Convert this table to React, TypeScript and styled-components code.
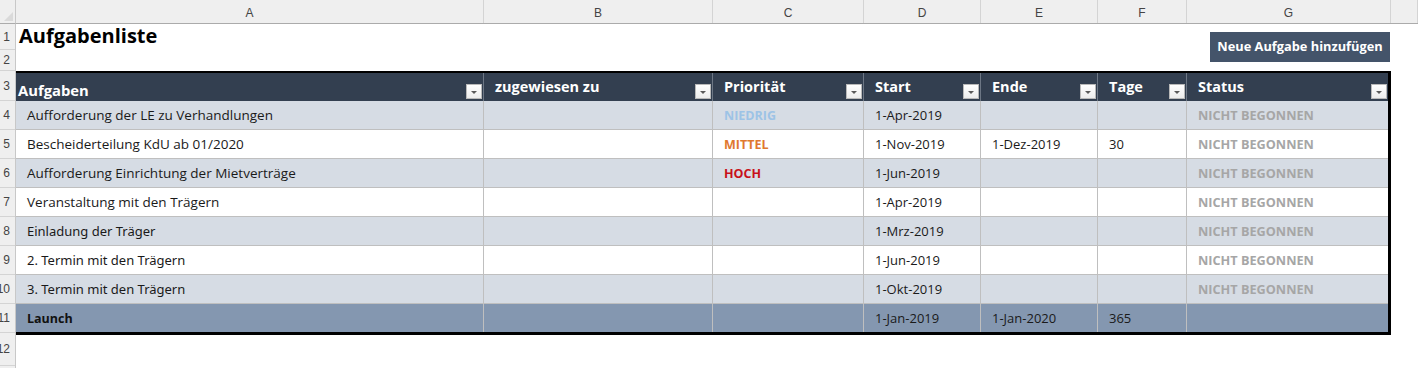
import React from "react";
import styled, { createGlobalStyle } from "styled-components";

const Global = createGlobalStyle`
  html, body { margin: 0; padding: 0; background: #ffffff; }
  body { font-family: "Open Sans", "DejaVu Sans", sans-serif; overflow: hidden; }
  * { box-sizing: border-box; }
`;

const GOTHIC = `"Open Sans", "DejaVu Sans", sans-serif`;
const CALIBRI = `"Noto Sans", "Liberation Sans", sans-serif`;
const UI = `"Liberation Sans", "DejaVu Sans", sans-serif`;

const COLS = [468, 229, 151, 117, 117, 89, 201];
const LETTER_W = [468, 229, 151, 117, 117, 89, 204];
const LETTERS = ["A", "B", "C", "D", "E", "F", "G"];
const ROW_H = [26, 21, 30, 29, 29, 29, 29, 29, 29, 29, 29, 33, 30];

const Sheet = styled.div`
  width: 1418px;
  height: 368px;
  display: grid;
  grid-template-columns: 16px 1fr;
  grid-template-rows: 24px 1fr;
  overflow: hidden;
`;

const Corner = styled.div`
  position: relative;
  background: #efefef;
  border-right: 1px solid #c8c8c8;
  border-bottom: 1px solid #ababab;
  &::after {
    content: "";
    position: absolute;
    right: 2px;
    bottom: 2px;
    border-left: 9px solid transparent;
    border-bottom: 9px solid #dadada;
  }
`;

const ColHeaders = styled.div`
  display: flex;
  background: #efefef;
  border-bottom: 1px solid #ababab;
`;

const Letter = styled.div<{ $w?: number }>`
  flex: ${(p) => (p.$w ? `0 0 ${p.$w}px` : "1 1 auto")};
  border-right: 1px solid #d4d4d4;
  display: flex;
  align-items: center;
  justify-content: center;
  font-family: ${UI};
  font-size: 12px;
  color: #444444;
  padding-top: 2px;
`;

const RowHeaders = styled.div`
  display: flex;
  flex-direction: column;
  background: #efefef;
  border-right: 1px solid #c8c8c8;
  overflow: hidden;
`;

const RowNum = styled.div<{ $h: number }>`
  flex: 0 0 ${(p) => p.$h}px;
  border-bottom: 1px solid #d4d4d4;
  display: flex;
  align-items: center;
  justify-content: flex-end;
  padding-right: 5px;
  font-family: ${UI};
  font-size: 12px;
  color: #444444;
  white-space: nowrap;
`;

const Content = styled.div`
  display: flex;
  flex-direction: column;
  width: 1375px;
`;

const TopArea = styled.div`
  height: 47px;
  display: flex;
  justify-content: space-between;
  align-items: flex-start;
`;

const Title = styled.h1`
  margin: -1px 0 0 3px;
  font-family: ${GOTHIC};
  font-weight: 700;
  font-size: 20px;
  line-height: 26px;
  color: #000000;
`;

const AddButton = styled.button`
  margin: 8px 1px 0 0;
  width: 180px;
  height: 30px;
  border: none;
  background: #44546a;
  color: #ffffff;
  font-family: ${GOTHIC};
  font-weight: 700;
  font-size: 12.8px;
  padding: 0 0 2px 0;
  cursor: pointer;
`;

const Table = styled.div`
  border-top: 2px solid #000000;
  border-right: 3px solid #000000;
  border-bottom: 3px solid #000000;
  display: flex;
  flex-direction: column;
`;

const Row = styled.div<{ $bg: string; $h: number; $line?: boolean }>`
  display: grid;
  grid-template-columns: ${COLS.map((c) => `${c}px`).join(" ")};
  height: ${(p) => p.$h}px;
  background: ${(p) => p.$bg};
  border-bottom: ${(p) => (p.$line ? "1px solid #bfbfbf" : "none")};
`;

const HeadCell = styled.div<{ $pad: number }>`
  display: flex;
  justify-content: space-between;
  align-items: center;
  padding-left: ${(p) => p.$pad}px;
  padding-right: 1px;
  border-right: 1px solid #6d7785;
  &:last-child { border-right: none; }
  min-width: 0;
`;

const HeadLabel = styled.span<{ $low?: boolean }>`
  font-family: ${GOTHIC};
  font-weight: 700;
  font-size: ${(p) => (p.$low ? "14.8px" : "14.5px")};
  color: #ffffff;
  white-space: nowrap;
  margin-top: ${(p) => (p.$low ? "5px" : "-1px")};
`;

const FilterBtn = styled.span`
  align-self: flex-end;
  margin-bottom: 2px;
  width: 16px;
  height: 15px;
  background: linear-gradient(#ffffff, #ececec);
  border: 1px solid #b9b9b9;
  display: flex;
  align-items: center;
  justify-content: center;
  flex: 0 0 auto;
  &::after {
    content: "";
    border-left: 3px solid transparent;
    border-right: 3px solid transparent;
    border-top: 3px solid #5a5a5a;
    margin-top: 1px;
  }
`;

const Cell = styled.div<{ $font?: string; $size?: number; $bold?: boolean; $color?: string }>`
  display: flex;
  align-items: center;
  padding-left: 11px;
  border-right: 1px solid #bfbfbf;
  &:last-child { border-right: none; }
  font-family: ${(p) => p.$font || GOTHIC};
  font-size: ${(p) => p.$size || 13}px;
  font-weight: ${(p) => (p.$bold ? 700 : 400)};
  color: ${(p) => p.$color || "#1a1a1a"};
  white-space: nowrap;
  overflow: hidden;
  min-width: 0;
`;

type Prio = "NIEDRIG" | "MITTEL" | "HOCH" | "";
const PRIO_COLOR: Record<string, string> = {
  NIEDRIG: "#9dc3e6",
  MITTEL: "#e0782e",
  HOCH: "#c8101a",
};

interface Task {
  task: string;
  prio: Prio;
  start: string;
  end: string;
  days: string;
  calibri?: boolean;
}

const TASKS: Task[] = [
  { task: "Aufforderung der LE zu Verhandlungen", prio: "NIEDRIG", start: "1-Apr-2019", end: "", days: "" },
  { task: "Bescheiderteilung KdU ab 01/2020", prio: "MITTEL", start: "1-Nov-2019", end: "1-Dez-2019", days: "30" },
  { task: "Aufforderung Einrichtung der Mietverträge", prio: "HOCH", start: "1-Jun-2019", end: "", days: "" },
  { task: "Veranstaltung mit den Trägern", prio: "", start: "1-Apr-2019", end: "", days: "" },
  { task: "Einladung der Träger", prio: "", start: "1-Mrz-2019", end: "", days: "", calibri: true },
  { task: "2. Termin mit den Trägern", prio: "", start: "1-Jun-2019", end: "", days: "", calibri: true },
  { task: "3. Termin mit den Trägern", prio: "", start: "1-Okt-2019", end: "", days: "", calibri: true },
];

const HEADERS = [
  { label: "Aufgaben", pad: 2, low: true },
  { label: "zugewiesen zu", pad: 11 },
  { label: "Priorität", pad: 11 },
  { label: "Start", pad: 11 },
  { label: "Ende", pad: 11 },
  { label: "Tage", pad: 11 },
  { label: "Status", pad: 11 },
];

export default function App() {
  return (
    <>
      <Global />
      <Sheet>
        <Corner />
        <ColHeaders>
          {LETTERS.map((l, i) => (
            <Letter key={l} $w={LETTER_W[i]}>
              {l}
            </Letter>
          ))}
          <Letter />
        </ColHeaders>
        <RowHeaders>
          {ROW_H.map((h, i) => (
            <RowNum key={i} $h={h}>
              {i + 1}
            </RowNum>
          ))}
        </RowHeaders>
        <Content>
          <TopArea>
            <Title>Aufgabenliste</Title>
            <AddButton>Neue Aufgabe hinzufügen</AddButton>
          </TopArea>
          <Table>
            <Row $bg="#333f50" $h={28}>
              {HEADERS.map((h) => (
                <HeadCell key={h.label} $pad={h.pad}>
                  <HeadLabel $low={h.low}>{h.label}</HeadLabel>
                  <FilterBtn />
                </HeadCell>
              ))}
            </Row>
            {TASKS.map((t, i) => (
              <Row key={t.task} $bg={i % 2 === 0 ? "#d6dce4" : "#ffffff"} $h={29} $line>
                <Cell $font={t.calibri ? CALIBRI : GOTHIC} $size={t.calibri ? 13 : 13.5}>
                  {t.task}
                </Cell>
                <Cell />
                <Cell $bold $size={12.5} $color={PRIO_COLOR[t.prio]}>
                  {t.prio}
                </Cell>
                <Cell>{t.start}</Cell>
                <Cell>{t.end}</Cell>
                <Cell>{t.days}</Cell>
                <Cell $bold $size={12.7} $color="#a6a6a6">
                  NICHT BEGONNEN
                </Cell>
              </Row>
            ))}
            <Row $bg="#8497b0" $h={28}>
              <Cell $bold $size={12.5} $color="#111111">
                Launch
              </Cell>
              <Cell />
              <Cell />
              <Cell>1-Jan-2019</Cell>
              <Cell>1-Jan-2020</Cell>
              <Cell>365</Cell>
              <Cell />
            </Row>
          </Table>
        </Content>
      </Sheet>
    </>
  );
}
